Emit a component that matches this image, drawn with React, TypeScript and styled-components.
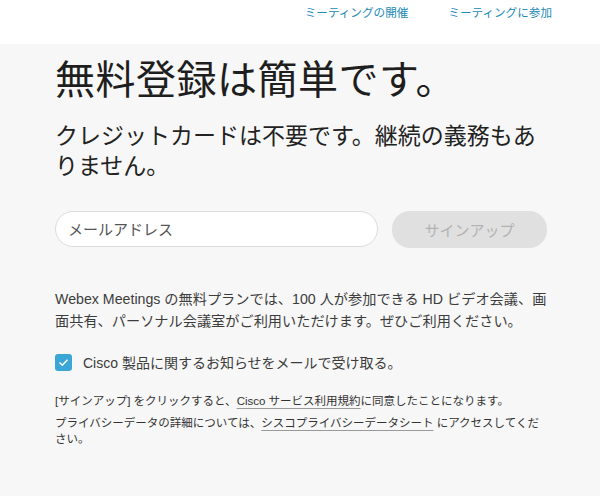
import styled, { createGlobalStyle } from "styled-components";

const GlobalStyle = createGlobalStyle`
  html, body {
    margin: 0;
    padding: 0;
    background: #f7f7f7;
    font-family: "Liberation Sans", "Noto Sans CJK JP", sans-serif;
  }
`;

const Header = styled.header`
  height: 44px;
  background: #ffffff;
  display: flex;
  justify-content: flex-end;
  align-items: flex-start;
  gap: 40px;
  padding: 5px 48px 0 0;
  box-sizing: border-box;
`;

const NavLink = styled.a`
  font-size: 11.6px;
  line-height: 16px;
  color: #1c8ab5;
  text-decoration: none;
  cursor: pointer;
`;

const Main = styled.main`
  width: 492px;
  padding: 13px 0 40px 55px;
  color: #222;
`;

const Title = styled.h1`
  margin: 0;
  font-size: 40px;
  line-height: 46px;
  font-weight: 400;
  letter-spacing: 0.5px;
  color: #1e1e1e;
`;

const Lead = styled.p`
  margin: 18px 0 0;
  font-size: 23px;
  line-height: 30px;
  color: #222;
`;

const Form = styled.form`
  display: flex;
  gap: 14px;
  margin-top: 30px;
`;

const EmailInput = styled.input`
  width: 323px;
  height: 36px;
  box-sizing: border-box;
  border: 1px solid #dcdcdc;
  border-radius: 18px;
  background: #fff;
  padding: 0 12px;
  font-family: inherit;
  font-size: 15px;
  outline: none;

  &::placeholder {
    color: #555;
  }
`;

const SignUp = styled.button`
  width: 155px;
  height: 37px;
  border: none;
  border-radius: 18px;
  background: #e0e0e0;
  color: #b2b2b2;
  font-family: inherit;
  font-size: 15px;
  cursor: default;
`;

const Text = styled.p<{ $gap?: number }>`
  margin: ${(p) => p.$gap ?? 0}px 0 0;
  font-size: 14.2px;
  line-height: 22px;
  color: #3c3c3c;
`;

const CheckRow = styled.label`
  display: flex;
  align-items: center;
  gap: 11px;
  margin-top: 20px;
  font-size: 14px;
  color: #3c3c3c;
`;

const CheckBox = styled.span`
  width: 17px;
  height: 17px;
  border-radius: 3px;
  background: #3aa6d6;
  display: flex;
  align-items: center;
  justify-content: center;
`;

const Legal = styled.div`
  margin-top: 21px;
  font-size: 11.5px;
  line-height: 16px;
  color: #333;
  display: flex;
  flex-direction: column;
  gap: 6px;
`;

const Under = styled.span`
  text-decoration: underline;
  text-decoration-color: #999;
  text-underline-offset: 3px;
`;

export default function App() {
  return (
    <>
      <GlobalStyle />
      <Header>
        <NavLink>ミーティングの開催</NavLink>
        <NavLink>ミーティングに参加</NavLink>
      </Header>
      <Main>
        <Title>無料登録は簡単です。</Title>
        <Lead>クレジットカードは不要です。継続の義務もありません。</Lead>
        <Form onSubmit={(e) => e.preventDefault()}>
          <EmailInput placeholder="メールアドレス" />
          <SignUp type="button">サインアップ</SignUp>
        </Form>
        <Text $gap={40}>
          Webex Meetings の無料プランでは、100 人が参加できる HD ビデオ会議、画面共有、パーソナル会議室がご利用いただけます。ぜひご利用ください。
        </Text>
        <CheckRow>
          <CheckBox>
            <svg width="11" height="9" viewBox="0 0 11 9">
              <path d="M1.5 4.5 L4.3 7.2 L9.5 1.8" fill="none" stroke="#fff" strokeWidth="1.6" />
            </svg>
          </CheckBox>
          Cisco 製品に関するお知らせをメールで受け取る。
        </CheckRow>
        <Legal>
          <div>
            [サインアップ] をクリックすると、<Under>Cisco サービス利用規約</Under>に同意したことになります。
          </div>
          <div>
            プライバシーデータの詳細については、<Under>シスコプライバシーデータシート</Under> にアクセスしてください。
          </div>
        </Legal>
      </Main>
    </>
  );
}
